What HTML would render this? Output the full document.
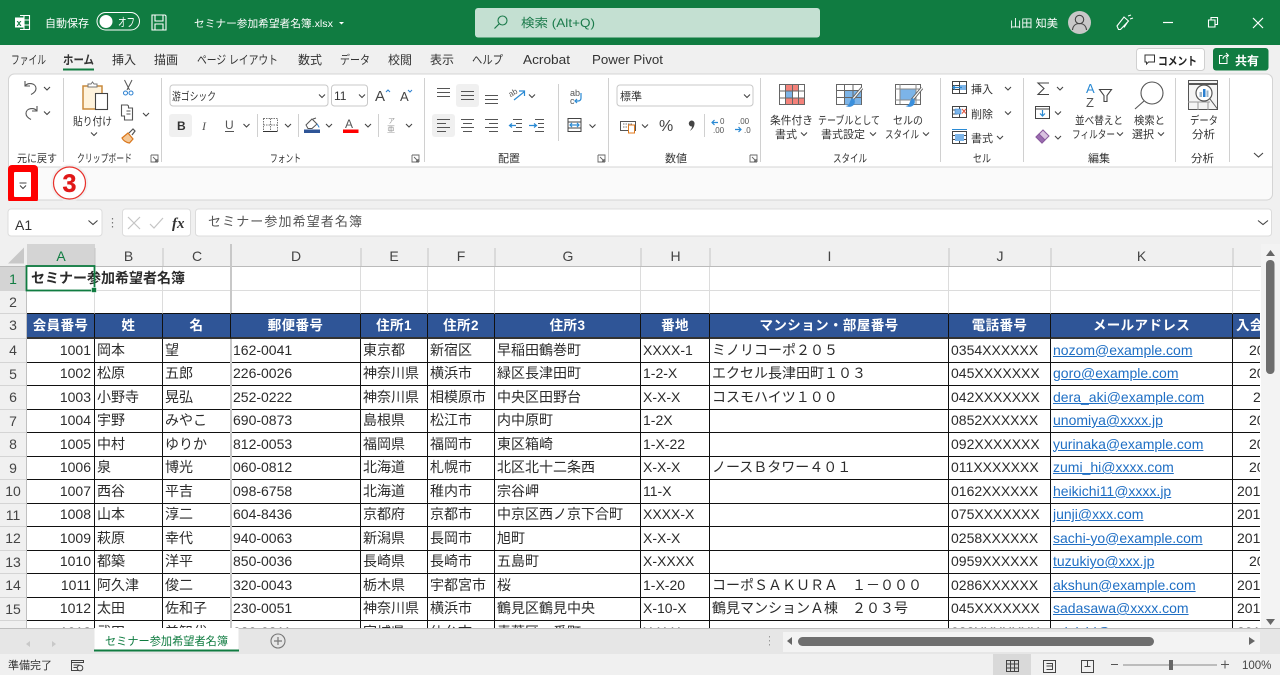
<!DOCTYPE html>
<html lang="ja"><head><meta charset="utf-8"><title>Excel</title>
<style>
html,body{margin:0;padding:0;width:1280px;height:675px;overflow:hidden;background:#fff}
#grid{position:absolute;left:27px;top:267px;width:1233px;height:361px;overflow:hidden;filter:blur(.25px)}
table{border-collapse:separate;border-spacing:0;table-layout:fixed;width:1333px;font:14px/20px "Liberation Sans","Noto Sans CJK JP",sans-serif;color:#2b2b2b}
td{box-sizing:border-box;padding:0 1px 2px 2px;border-right:1px solid #111;border-bottom:1px solid #111;white-space:nowrap;overflow:hidden;vertical-align:middle}
tr.e td{height:24px}tr.o td{height:23px}
tr.g td{border-right-color:#dcdcdc;border-bottom-color:#dcdcdc;overflow:visible;padding-bottom:1px}
tr.h td{height:25px;background:#2f5597;color:#fff;font-weight:bold;font-size:13.5px;text-align:center;border-bottom:2px solid #333;letter-spacing:.4px;padding:0}
td.n{text-align:right;padding-right:3px}
td a{color:#1f6fc4;text-decoration:underline}
td.l{border-right:0;padding-left:var(--p)}
#chrome{position:absolute;left:0;top:0;pointer-events:none;filter:blur(.2px)}
#chrome text{font-family:"Liberation Sans","Noto Sans CJK JP",sans-serif;font-size:11px;fill:#333}
.ch{fill:none;stroke:#444;stroke-width:1.1}
.ln{fill:none;stroke:#555;stroke-width:1.1}
.bl{fill:none;stroke:#2a8ad4;stroke-width:1.2}
</style></head><body>
<div id="grid"><table>
<colgroup><col style="width:68px"><col style="width:68px"><col style="width:68px"><col style="width:130px"><col style="width:67px"><col style="width:67px"><col style="width:146px"><col style="width:69px"><col style="width:239px"><col style="width:102px"><col style="width:182px"><col style="width:127px"></colgroup>
<tr class="e g"><td style="font-weight:bold;padding-left:4px;letter-spacing:0">セミナー参加希望者名簿</td><td></td><td></td><td></td><td></td><td></td><td></td><td></td><td></td><td></td><td></td><td></td></tr>
<tr class="o g"><td style="border-bottom-color:#111"></td><td style="border-bottom-color:#111"></td><td style="border-bottom-color:#111"></td><td style="border-bottom-color:#111"></td><td style="border-bottom-color:#111"></td><td style="border-bottom-color:#111"></td><td style="border-bottom-color:#111"></td><td style="border-bottom-color:#111"></td><td style="border-bottom-color:#111"></td><td style="border-bottom-color:#111"></td><td style="border-bottom-color:#111"></td><td style="border-bottom-color:#111"></td></tr>
<tr class="h"><td>会員番号</td><td>姓</td><td>名</td><td>郵便番号</td><td>住所1</td><td>住所2</td><td>住所3</td><td>番地</td><td>マンション・部屋番号</td><td>電話番号</td><td>メールアドレス</td><td style="text-align:left;padding-left:3px">入会日</td></tr>
<tr class="e"><td class="n">1001</td><td>岡本</td><td>望</td><td>162-0041</td><td>東京都</td><td>新宿区</td><td>早稲田鶴巻町</td><td>XXXX-1</td><td>ミノリコーポ２０５</td><td>0354XXXXXX</td><td><a>nozom@example.com</a></td><td class="l" style="--p:16px">2016/4/1</td></tr>
<tr class="o"><td class="n">1002</td><td>松原</td><td>五郎</td><td>226-0026</td><td>神奈川県</td><td>横浜市</td><td>緑区長津田町</td><td>1-2-X</td><td>エクセル長津田町１０３</td><td>045XXXXXXX</td><td><a>goro@example.com</a></td><td class="l" style="--p:16px">2016/5/1</td></tr>
<tr class="e"><td class="n">1003</td><td>小野寺</td><td>晃弘</td><td>252-0222</td><td>神奈川県</td><td>相模原市</td><td>中央区田野台</td><td>X-X-X</td><td>コスモハイツ１００</td><td>042XXXXXXX</td><td><a>dera_aki@example.com</a></td><td class="l" style="--p:20px">2016/6/1</td></tr>
<tr class="o"><td class="n">1004</td><td>宇野</td><td>みやこ</td><td>690-0873</td><td>島根県</td><td>松江市</td><td>内中原町</td><td>1-2X</td><td></td><td>0852XXXXXX</td><td><a>unomiya@xxxx.jp</a></td><td class="l" style="--p:16px">2016/7/1</td></tr>
<tr class="e"><td class="n">1005</td><td>中村</td><td>ゆりか</td><td>812-0053</td><td>福岡県</td><td>福岡市</td><td>東区箱崎</td><td>1-X-22</td><td></td><td>092XXXXXXX</td><td><a>yurinaka@example.com</a></td><td class="l" style="--p:16px">2016/8/1</td></tr>
<tr class="o"><td class="n">1006</td><td>泉</td><td>博光</td><td>060-0812</td><td>北海道</td><td>札幌市</td><td>北区北十二条西</td><td>X-X-X</td><td>ノースＢタワー４０１</td><td>011XXXXXXX</td><td><a>zumi_hi@xxxx.com</a></td><td class="l" style="--p:16px">2016/9/1</td></tr>
<tr class="e"><td class="n">1007</td><td>西谷</td><td>平吉</td><td>098-6758</td><td>北海道</td><td>稚内市</td><td>宗谷岬</td><td>11-X</td><td></td><td>0162XXXXXX</td><td><a>heikichi11@xxxx.jp</a></td><td class="l" style="--p:4px">2016/10/1</td></tr>
<tr class="o"><td class="n">1008</td><td>山本</td><td>淳二</td><td>604-8436</td><td>京都府</td><td>京都市</td><td>中京区西ノ京下合町</td><td>XXXX-X</td><td></td><td>075XXXXXXX</td><td><a>junji@xxx.com</a></td><td class="l" style="--p:4px">2016/11/1</td></tr>
<tr class="e"><td class="n">1009</td><td>萩原</td><td>幸代</td><td>940-0063</td><td>新潟県</td><td>長岡市</td><td>旭町</td><td>X-X-X</td><td></td><td>0258XXXXXX</td><td><a>sachi-yo@example.com</a></td><td class="l" style="--p:4px">2016/12/1</td></tr>
<tr class="o"><td class="n">1010</td><td>都築</td><td>洋平</td><td>850-0036</td><td>長崎県</td><td>長崎市</td><td>五島町</td><td>X-XXXX</td><td></td><td>0959XXXXXX</td><td><a>tuzukiyo@xxx.jp</a></td><td class="l" style="--p:16px">2017/1/1</td></tr>
<tr class="e"><td class="n">1011</td><td>阿久津</td><td>俊二</td><td>320-0043</td><td>栃木県</td><td>宇都宮市</td><td>桜</td><td>1-X-20</td><td>コーポＳＡＫＵＲＡ　１－０００</td><td>0286XXXXXX</td><td><a>akshun@example.com</a></td><td class="l" style="--p:4px">2017/10/1</td></tr>
<tr class="o"><td class="n">1012</td><td>太田</td><td>佐和子</td><td>230-0051</td><td>神奈川県</td><td>横浜市</td><td>鶴見区鶴見中央</td><td>X-10-X</td><td>鶴見マンションＡ棟　２０３号</td><td>045XXXXXXX</td><td><a>sadasawa@xxxx.com</a></td><td class="l" style="--p:4px">2017/11/1</td></tr>
<tr class="e"><td class="n">1013</td><td>武田</td><td>美智代</td><td>980-0811</td><td>宮城県</td><td>仙台市</td><td>青葉区一番町</td><td>X-X-X</td><td></td><td>022XXXXXXX</td><td><a>minichi@xxxx.com</a></td><td class="l" style="--p:4px">2017/12/1</td></tr>
</table></div>

<svg id="chrome" width="1280" height="675" viewBox="0 0 1280 675" xmlns="http://www.w3.org/2000/svg">
<defs><path id="c" class="ch" d="M-3-1.5 0 1.5 3-1.500"/></defs>

<!-- title bar -->
<rect width="1280" height="45" fill="#107c41"/>
<g fill="none" stroke="#fff" stroke-width="1.1">
<path d="M20 15.5h9.5v14H20M24 15.5v14M24 20h5.5M24 25h5.5"/>
</g>
<rect x="15" y="17.5" width="9" height="10" fill="#fff"/>
<text x="16.5" y="26" style="font-size:9px;font-weight:bold;fill:#107c41">x</text>
<text x="45" y="27" style="fill:#fff" textLength="44" lengthAdjust="spacingAndGlyphs">自動保存</text>
<rect x="97" y="12.5" width="42.500" height="17.500" rx="8.750" fill="none" stroke="#fff"/>
<circle cx="106" cy="21.500" r="6.500" fill="#fff"/>
<text x="118" y="26.500" style="fill:#fff;font-size:12px" textLength="17" lengthAdjust="spacingAndGlyphs">オフ</text>
<path d="M152 15h13l1 1v14h-14zM155 15v6h8v-6M155 30v-6h8v6" fill="none" stroke="#fff" stroke-width="1.1"/>
<text x="194" y="27" style="fill:#fff;font-size:10.5px" textLength="139" lengthAdjust="spacingAndGlyphs">セミナー参加希望者名簿.xlsx</text>
<path d="M339 22h5l-2.500 2.500z" fill="#fff"/>
<rect x="475" y="8" width="345" height="29.500" rx="3" fill="#c4e0d2"/>
<circle cx="502.500" cy="20.500" r="4.500" fill="none" stroke="#1a7a4a" stroke-width="1.1"/>
<path d="M499 24l-4.500 4.500" stroke="#1a7a4a" stroke-width="1.2"/>
<text x="521" y="27" style="fill:#1a7a4a;font-size:12px" textLength="74" lengthAdjust="spacingAndGlyphs">検索 (Alt+Q)</text>
<text x="1010" y="27" style="fill:#fff;font-size:11px" textLength="48" lengthAdjust="spacingAndGlyphs">山田 知美</text>
<circle cx="1079.500" cy="22.500" r="11.500" fill="#c8c8c8"/>
<circle cx="1079.500" cy="19.500" r="4.200" fill="none" stroke="#444" stroke-width="1.1"/>
<path d="M1072.500 30c.5-4.500 3.500-6.500 7-6.500s6.500 2 7 6.500" fill="none" stroke="#444" stroke-width="1.1"/>
<path d="M1117 26l7-9 4.500 4-8 8.500h-2zM1124 27.500l4-6M1128 16l3-1M1130 19l3-1" fill="none" stroke="#fff" stroke-width="1.1"/>
<path d="M1163 22.500h10" stroke="#fff" stroke-width="1.200"/>
<path d="M1208.500 20h6.500v7h-6.500zM1211 20v-2.500h6.500v7H1215" fill="none" stroke="#fff" stroke-width="1.100"/>
<path d="M1253 18l10 10M1263 18l-10 10" stroke="#fff" stroke-width="1.200"/>

<!-- tab strip -->
<rect y="45" width="1280" height="29" fill="#f0f0f0"/>
<g>
<text x="11" y="64" style="font-size:12px" textLength="35" lengthAdjust="spacingAndGlyphs">ファイル</text>
<text x="63" y="64" style="font-size:12px;font-weight:bold" textLength="31" lengthAdjust="spacingAndGlyphs">ホーム</text>
<text x="112" y="64" style="font-size:12px">挿入</text>
<text x="154" y="64" style="font-size:12px">描画</text>
<text x="197" y="64" style="font-size:12px" textLength="81" lengthAdjust="spacingAndGlyphs">ページ レイアウト</text>
<text x="298" y="64" style="font-size:12px">数式</text>
<text x="340" y="64" style="font-size:12px" textLength="30" lengthAdjust="spacingAndGlyphs">データ</text>
<text x="388" y="64" style="font-size:12px">校閲</text>
<text x="430" y="64" style="font-size:12px">表示</text>
<text x="472" y="64" style="font-size:12px" textLength="31" lengthAdjust="spacingAndGlyphs">ヘルプ</text>
<text x="523" y="64" style="font-size:12.500px" textLength="47" lengthAdjust="spacingAndGlyphs">Acrobat</text>
<text x="592" y="64" style="font-size:12.500px" textLength="71" lengthAdjust="spacingAndGlyphs">Power Pivot</text>
</g>
<rect x="63" y="68.500" width="31" height="2" fill="#107c41"/>
<rect x="1136.500" y="48.500" width="68" height="22" rx="3" fill="#fff" stroke="#d0d0d0"/>
<path d="M1145 55h9.500v7h-6l-2 2v-2h-1.500z" fill="none" stroke="#333"/>
<text x="1158" y="65" style="font-size:11.500px;font-weight:bold;fill:#222" textLength="39" lengthAdjust="spacingAndGlyphs">コメント</text>
<rect x="1213" y="48" width="55.500" height="22.500" rx="3" fill="#107c41"/>
<path d="M1227 58v5.500h-7.500v-8h3M1223 59c0-2 1.500-3.500 5-3.500M1226 53l2.500 2.500-2.500 2.500" fill="none" stroke="#fff"/>
<text x="1235" y="65" style="font-size:12px;font-weight:bold;fill:#fff">共有</text>

<!-- ribbon -->
<rect y="74" width="1280" height="127" fill="#f0f0f0"/>
<rect x="8.500" y="74" width="1264" height="126" rx="6" fill="#fafafa" stroke="#d4d4d4"/>
<path d="M8.500 167V80a6 6 0 0 1 6-6h1252a6 6 0 0 1 6 6v87z" fill="#fff" stroke="#d4d4d4"/>
<g stroke="#d0d0d0" stroke-width="1">
<path d="M63.500 78v84M161.500 78v84M424.500 78v84M608.500 78v84M760.500 78v84M940.500 78v84M1023.500 78v84M1175.500 78v84M1229.500 78v84"/>
<path d="M257.500 114v23M298.500 114v23M378.500 114v23M558.500 84v57M704.500 114v23"/>
</g>
<!-- group labels -->
<text x="17" y="162" textLength="40" lengthAdjust="spacingAndGlyphs">元に戻す</text>
<text x="77" y="162" textLength="55" lengthAdjust="spacingAndGlyphs">クリップボード</text>
<text x="270" y="162" textLength="31" lengthAdjust="spacingAndGlyphs">フォント</text>
<text x="498" y="162">配置</text>
<text x="665" y="162">数値</text>
<text x="833" y="162" textLength="34" lengthAdjust="spacingAndGlyphs">スタイル</text>
<text x="973" y="162" textLength="18" lengthAdjust="spacingAndGlyphs">セル</text>
<text x="1088" y="162">編集</text>
<text x="1191" y="162" textLength="23" lengthAdjust="spacingAndGlyphs">分析</text>
<g fill="none" stroke="#666" stroke-width=".9">
<path d="M151 155h7v7M151 155v7h7M153 157l4 4M157 159v2h-2" id="dl"/>
<use href="#dl" x="261"/><use href="#dl" x="447"/><use href="#dl" x="599"/>
</g>

<!-- undo / redo -->
<path d="M25 81v5h5M25 86c3-4 11-3 11 2.500 0 3-2 4.500-5 6" class="ln"/>
<path d="M37 106v5h-5M37 111c-3-4-11-3-11 2.500 0 3 2 4.500 5 6" class="ln"/>
<use href="#c" x="47" y="88.500"/><use href="#c" x="47" y="113"/>

<!-- clipboard -->
<rect x="83" y="86" width="19" height="23" fill="#fff3dc" stroke="#c98a3c" stroke-width="1.500"/>
<path d="M88 86v-2h3l1.500-2 1.500 2h3v3H88z" fill="#fff" stroke="#777"/>
<rect x="95.500" y="93.500" width="12" height="16" fill="#fff" stroke="#444" stroke-width="1.100"/>
<text x="73" y="125" textLength="39" lengthAdjust="spacingAndGlyphs">貼り付け</text>
<use href="#c" x="94" y="134"/>
<path d="M124.500 80l5 10M132 80l-5 10" stroke="#555" fill="none"/>
<circle cx="125.500" cy="93" r="2" fill="none" stroke="#2a7fd0"/><circle cx="131" cy="93" r="2" fill="none" stroke="#2a7fd0"/>
<path d="M121.500 105h6l1 1v2h4v12h-8v-4h-3zM128.500 108h4M126.500 111h4M126.500 114h4" class="ln"/>
<use href="#c" x="146" y="114.500"/>
<path d="M122 138l6-5 5 6-3.500 4c-3-.5-6-2-7.500-5z" fill="#f5c896" stroke="#d9761c" stroke-width="1.200"/>
<path d="M129 133l4-4 2 2-3 4" fill="none" stroke="#555" stroke-width="1.200"/>

<!-- font -->
<rect x="170" y="85" width="158" height="21" rx="3" fill="#fff" stroke="#c8c8c8"/>
<text x="172" y="100" textLength="44" lengthAdjust="spacingAndGlyphs">游ゴシック</text>
<use href="#c" x="322" y="96"/>
<rect x="331.500" y="85" width="36" height="21" rx="3" fill="#fff" stroke="#c8c8c8"/>
<text x="334" y="100" style="font-size:12px">11</text>
<use href="#c" x="362" y="96"/>
<text x="375" y="101" style="font-size:15px;fill:#444">A</text>
<path d="M386 92l2-2 2 2" fill="none" stroke="#2a7fd0"/>
<text x="400" y="101" style="font-size:13px;fill:#444">A</text>
<path d="M408 90l2 2 2-2" fill="none" stroke="#2a7fd0"/>
<rect x="169" y="114" width="23" height="23" rx="3" fill="#f0f0f0"/>
<text x="177" y="130" style="font-size:12px;font-weight:bold;fill:#333">B</text>
<text x="202" y="130" style="font-size:12px;font-style:italic;fill:#555;font-family:'Liberation Serif'">I</text>
<text x="225" y="129" style="font-size:12px;fill:#555">U</text>
<path d="M225 131.500h9" stroke="#555"/>
<use href="#c" x="246.500" y="125.500"/>
<path d="M263.500 118.500h14v13h-14zM270.500 118.500v13M263.500 125h14" fill="none" stroke="#777" stroke-dasharray="1.500 1"/>
<path d="M263 131.500h14.500" stroke="#333"/>
<use href="#c" x="288" y="125.500"/>
<path d="M306 125l6-6 5 5-5 4.500h-4zM313 119l3-1" fill="none" stroke="#555"/>
<path d="M317 124c1 1.500 2 2.500 2 3.500" stroke="#2a7fd0" fill="none"/>
<rect x="304" y="129.500" width="16" height="3.500" fill="#2f5597"/>
<use href="#c" x="329" y="125.500"/>
<text x="345" y="128" style="font-size:12px;fill:#555">A</text>
<rect x="343" y="129.500" width="15.500" height="3.500" fill="#f00"/>
<use href="#c" x="368" y="125.500"/>
<text x="388" y="123" style="font-size:7px;fill:#999">ア</text>
<text x="387" y="132" style="font-size:8px;fill:#999">亜</text>
<use href="#c" x="409" y="125.500"/>

<!-- alignment -->
<rect x="456" y="84" width="23" height="23" rx="3" fill="#f0f0f0"/>
<rect x="432" y="114" width="23" height="23" rx="3" fill="#f0f0f0"/>
<g stroke="#555" stroke-width="1.100" fill="none">
<path d="M437 88.500h13M437 92.500h13M437 96.500h13"/>
<path d="M461 91.500h13M461 95.500h13M461 99.500h13"/>
<path d="M485 95.500h13M485 99.500h13M485 103.500h13"/>
<path d="M437 119.500h13M437 123.500h9M437 127.500h13M437 131.500h9"/>
<path d="M461 119.500h13M463 123.500h9M461 127.500h13M463 131.500h9"/>
<path d="M485 119.500h13M489 123.500h9M485 127.500h13M489 131.500h9"/>
<path d="M513 119.500h9M516 123.500h6M516 127.500h6M513 131.500h9"/>
<path d="M535 119.500h9M535 131.500h9M538 123.500h6M538 127.500h6"/>
</g>
<path d="M516 125.500h-6M512 123.500l-2.500 2 2.500 2M535 125.500h-1M529 125.500h7M534 123.500l2.500 2-2.500 2" class="bl"/>
<text x="509" y="96" style="font-size:8px;fill:#555" transform="rotate(-30 512 94)">ab</text>
<path d="M514 100l10-8M519 91h5.500v5" class="bl"/>
<use href="#c" x="532" y="96"/>
<text x="570" y="96" style="font-size:9px;fill:#555">ab</text>
<text x="570" y="104" style="font-size:9px;fill:#555">c</text>
<path d="M581 93v5c0 2-1 3-3 3h-3M577 99l-2 2 2 2" class="bl"/>
<path d="M568 118.500h13v13h-13zM568 122h13M568 128h13" fill="none" stroke="#444"/>
<path d="M570 125h9M572 123l-2 2 2 2M577 123l2 2-2 2" class="bl"/>
<use href="#c" x="592.500" y="126"/>

<!-- number -->
<rect x="617" y="85" width="136" height="21" rx="3" fill="#fff" stroke="#c8c8c8"/>
<text x="620" y="100">標準</text>
<use href="#c" x="747" y="96"/>
<rect x="620.500" y="121.500" width="15" height="9" fill="#fff" stroke="#555"/>
<path d="M623 124h10M623 127h6" stroke="#777" stroke-dasharray="1.500 1"/>
<rect x="628.500" y="125" width="6" height="8" fill="#fff" stroke="#e07a1c"/>
<use href="#c" x="645" y="126"/>
<text x="659" y="131" style="font-size:16px;fill:#444">%</text>
<path d="M691.500 120.500a3 3 0 0 1 3 3.500c-.2 3-2.200 5.500-4.700 7 1.500-2 2.200-3.300 2.300-4.500a3 3 0 0 1-.6-6z" fill="#444"/>
<text x="720" y="124" style="font-size:8px;fill:#555">0</text><text x="713" y="133" style="font-size:8px;fill:#555">.00</text>
<path d="M718 122.500h-6M714.500 120l-2.500 2.500 2.500 2.500" class="bl"/>
<text x="738" y="124" style="font-size:8px;fill:#555">.00</text><text x="744" y="133" style="font-size:8px;fill:#555">.0</text>
<path d="M735 129.500h6M738.500 127l2.500 2.500-2.500 2.500" class="bl"/>

<!-- conditional formatting -->
<g transform="translate(779 84)">
<rect x=".5" y=".5" width="25" height="20" fill="#fff" stroke="#666"/>
<rect x="6" y="1" width="13" height="6" fill="#f4827a"/><rect x="6" y="7" width="8" height="7" fill="#7cb4e8"/><rect x="6" y="14" width="19" height="6" fill="#f4827a"/>
<path d="M6.500 0v20M13.500 0v20M19.500 0v20M0 7h25M0 14h25" stroke="#666" fill="none"/>
</g>
<text x="770" y="124" textLength="43" lengthAdjust="spacingAndGlyphs">条件付き</text>
<text x="775" y="138">書式</text><use href="#c" x="804" y="134"/>
<!-- table format -->
<g transform="translate(836 84)">
<rect x=".5" y=".5" width="25" height="20" fill="#fff" stroke="#666"/>
<rect x="9" y="6.500" width="16" height="14" fill="#7cb4e8"/>
<path d="M8.500 0v20M17 0v20M0 6.500h25M0 13.500h25" stroke="#666" fill="none"/>
</g>
<g id="br"><path d="M862 88l-10 12" stroke="#666" stroke-width="3"/><path d="M862 88l-10 12" stroke="#fff" stroke-width="1.200"/><path d="M853 98c-2 1-3 3-3.500 5-.5 1.500-2 3-4 3 3 1.500 7 1 8.500-1.500 1-1.500 1-3 .5-4.500z" fill="#3a8fdc"/></g>
<text x="818" y="124" textLength="62" lengthAdjust="spacingAndGlyphs">テーブルとして</text>
<text x="821" y="138" textLength="44">書式設定</text><use href="#c" x="873" y="134"/>
<!-- cell style -->
<g transform="translate(895 84)">
<rect x=".5" y=".5" width="25" height="20" fill="#fff" stroke="#666"/>
<rect x="5" y="5" width="16" height="11" fill="#7cb4e8"/>
<path d="M5 0v20M21 0v20M0 5h25M0 16h25" stroke="#888" fill="none"/>
</g>
<use href="#br" x="60"/>
<text x="893" y="124" textLength="30" lengthAdjust="spacingAndGlyphs">セルの</text>
<text x="885" y="138" textLength="34" lengthAdjust="spacingAndGlyphs">スタイル</text><use href="#c" x="926" y="134"/>

<!-- cells -->
<g fill="none" stroke="#444" stroke-width="1">
<path d="M952.500 81.500h14v12h-14zM952.500 85.500h14M952.500 89.500h14M959.500 81.500v12"/>
<path d="M952.500 106.500h14v11h-14zM952.500 110h5M952.500 114h5M959.500 106.500v3M959.500 114v3"/>
<path d="M952.500 131.500h14v12h-14zM952.500 135.500h14M952.500 139.500h14M959.500 135.500v8"/>
</g>
<rect x="960" y="85" width="6" height="5" fill="#7cb4e8"/><path d="M962 87.500h-9M955 85.500l-2 2 2 2" class="bl"/>
<rect x="955" y="109" width="6" height="5" fill="#7cb4e8" stroke="#2a7fd0" stroke-width=".5"/><path d="M962 109l4 4.500M966 109l-4 4.500" stroke="#e0503a" fill="none"/>
<rect x="955" y="134" width="9" height="7" fill="#7cb4e8"/><path d="M952 129.500h15" stroke="#2a8ad4"/>
<text x="971" y="93" textLength="22" lengthAdjust="spacingAndGlyphs">挿入</text><use href="#c" x="1008" y="88.500"/>
<text x="971" y="118" textLength="22" lengthAdjust="spacingAndGlyphs">削除</text><use href="#c" x="1008" y="113"/>
<text x="971" y="142" textLength="22" lengthAdjust="spacingAndGlyphs">書式</text><use href="#c" x="1000" y="137.500"/>

<!-- editing -->
<path d="M1049 83h-11l6 5.500-6 6h11" fill="none" stroke="#444" stroke-width="1.100"/><use href="#c" x="1060" y="88.500"/>
<rect x="1035.500" y="106.500" width="14" height="12" fill="#fff" stroke="#444"/><path d="M1035.500 109h14" stroke="#444"/><path d="M1042.500 110v6M1040 113.500l2.500 2.500 2.500-2.500" class="bl"/><use href="#c" x="1058" y="113"/>
<path d="M1036 137l7-7 6 6-7 7z" fill="#d9c2e0" stroke="#8a5a9e"/><path d="M1036 137l3-3 6 6-3 3z" fill="#9a6cb0" stroke="#8a5a9e"/><use href="#c" x="1058" y="137.500"/>
<text x="1086" y="93" style="font-size:13px;fill:#2a8ad4">A</text>
<text x="1086" y="107" style="font-size:13px;fill:#555">Z</text>
<path d="M1100 90h12l-4.500 6v6h-3v-6z" fill="none" stroke="#444" stroke-width="1.100" transform="translate(-.5 -.5)"/>
<text x="1075" y="124" textLength="48" lengthAdjust="spacingAndGlyphs">並べ替えと</text>
<text x="1072" y="138" textLength="43" lengthAdjust="spacingAndGlyphs">フィルター</text><use href="#c" x="1120" y="134"/>
<circle cx="1152" cy="93" r="11" fill="none" stroke="#555" stroke-width="1.100"/>
<path d="M1144 101l-9 8" stroke="#555" stroke-width="1.100"/>
<text x="1134" y="124" textLength="31" lengthAdjust="spacingAndGlyphs">検索と</text>
<text x="1132" y="138">選択</text><use href="#c" x="1161" y="134"/>
<!-- analysis -->
<rect x="1188.500" y="80.500" width="29" height="29" fill="#f4f4f4" stroke="#555"/>
<path d="M1188 84h30" stroke="#555" stroke-width="2"/>
<path d="M1188 102h22M1198 102v8M1208 102v8" stroke="#999"/>
<circle cx="1204" cy="93" r="8" fill="#fff" stroke="#555" stroke-width="1.200"/>
<rect x="1199.500" y="92" width="2.500" height="5" fill="#9db4c8"/><rect x="1203" y="89" width="2.500" height="8" fill="#2a7fd0"/><rect x="1206.500" y="90.500" width="2" height="6.500" fill="#9db4c8"/>
<path d="M1210 99l7.500 10" stroke="#555"/>
<text x="1190" y="124" textLength="28" lengthAdjust="spacingAndGlyphs">データ</text>
<text x="1192" y="138" textLength="23" lengthAdjust="spacingAndGlyphs">分析</text>
<path d="M1254 153l4.500 4 4.500-4" class="ch"/>

<!-- red marker and number -->
<path d="M8 169a4 4 0 0 1 4-4h22a4 4 0 0 1 4 4v30a4 4 0 0 1-4 4H12a4 4 0 0 1-4-4z" fill="#fe0000"/>
<rect x="14" y="172" width="17" height="25" rx="1" fill="#fff"/>
<path d="M19.500 183h7M20 185.500l3 3 3-3" fill="none" stroke="#444"/>
<circle cx="69.500" cy="183" r="18.500" fill="#eee" opacity=".8"/>
<circle cx="69.500" cy="183" r="16" fill="#fff" stroke="#e8302a" stroke-width="1.200"/>
<text x="69.500" y="192" text-anchor="middle" style="font-size:25px;font-weight:bold;fill:#e01818;stroke:#e01818;stroke-width:.4">3</text>

<!-- formula bar -->
<rect y="201" width="1280" height="43" fill="#f0f0f0"/>
<rect x="8" y="209" width="94" height="27" rx="3" fill="#fff" stroke="#dcdcdc"/>
<text x="15" y="230" style="font-size:14px;fill:#333">A1</text>
<path d="M88.500 220.500l4.500 4 4.500-4" class="ch"/>
<path d="M112.500 218v1.500M112.500 222v1.500M112.500 226v1.500" stroke="#777" stroke-width="1.200"/>
<rect x="122.500" y="209" width="68" height="27" rx="3" fill="#fff" stroke="#dcdcdc"/>
<path d="M128 217l12 12M140 217l-12 12M150 224l4 4 9-10" fill="none" stroke="#c4c4c4" stroke-width="1.200"/>
<text x="172" y="228" style="font-size:15px;font-style:italic;font-weight:bold;font-family:'Liberation Serif';fill:#333">fx</text>
<rect x="195.500" y="209" width="1076" height="27" rx="3" fill="#fff" stroke="#dcdcdc"/>
<text x="208" y="226" style="font-size:13px;fill:#555" textLength="154" lengthAdjust="spacing">セミナー参加希望者名簿</text>
<path d="M1258 220.500l5 4 5-4" class="ch"/>

<!-- column headers -->
<rect y="244" width="1261" height="23" fill="#f0f0f0"/>
<rect x="27" y="244" width="68" height="22.500" fill="#d4d4d4"/>
<path d="M8 263.500h16v-16z" fill="#c8c8c8"/>
<g stroke="#c4c4c4"><path d="M95 248v18M163 248v18M361 248v18M428 248v18M495 248v18M641 248v18M710 248v18M949 248v18M1051 248v18M1233 248v18"/></g>
<path d="M0 266.500h1261" stroke="#bbb"/>
<g text-anchor="middle">
<text x="61" y="261" style="font-size:14px;fill:#107c41">A</text>
<text x="128.500" y="261" style="font-size:14px;fill:#444">B</text>
<text x="197" y="261" style="font-size:14px;fill:#444">C</text>
<text x="296" y="261" style="font-size:14px;fill:#444">D</text>
<text x="394" y="261" style="font-size:14px;fill:#444">E</text>
<text x="461" y="261" style="font-size:14px;fill:#444">F</text>
<text x="568" y="261" style="font-size:14px;fill:#444">G</text>
<text x="675.500" y="261" style="font-size:14px;fill:#444">H</text>
<text x="829.500" y="261" style="font-size:14px;fill:#444">I</text>
<text x="1000" y="261" style="font-size:14px;fill:#444">J</text>
<text x="1141.500" y="261" style="font-size:14px;fill:#444">K</text>
</g>
<!-- row headers -->
<rect y="267" width="27" height="361" fill="#f0f0f0"/>
<rect y="267" width="26.500" height="24" fill="#d4d4d4"/>
<path d="M26.500 267v361" stroke="#c0c0c0"/>
<g stroke="#d4d4d4"><path d="M0 313.500h26M0 338.500h26M0 362.500h26M0 385.500h26M0 409.500h26M0 432.500h26M0 456.500h26M0 479.500h26M0 503.500h26M0 526.500h26M0 550.500h26M0 573.500h26M0 597.500h26M0 620.500h26"/></g>
<g text-anchor="middle">
<text x="13" y="284" style="font-size:14px;fill:#107c41">1</text>
<text x="13" y="307" style="font-size:14px;fill:#444">2</text>
<text x="13" y="330" style="font-size:14px;fill:#444">3</text>
<text x="13" y="355" style="font-size:14px;fill:#444">4</text>
<text x="13" y="379" style="font-size:14px;fill:#444">5</text>
<text x="13" y="402" style="font-size:14px;fill:#444">6</text>
<text x="13" y="426" style="font-size:14px;fill:#444">7</text>
<text x="13" y="449" style="font-size:14px;fill:#444">8</text>
<text x="13" y="473" style="font-size:14px;fill:#444">9</text>
<text x="13" y="496" style="font-size:14px;fill:#444">10</text>
<text x="13" y="520" style="font-size:14px;fill:#444">11</text>
<text x="13" y="543" style="font-size:14px;fill:#444">12</text>
<text x="13" y="567" style="font-size:14px;fill:#444">13</text>
<text x="13" y="590" style="font-size:14px;fill:#444">14</text>
<text x="13" y="614" style="font-size:14px;fill:#444">15</text>
</g>
<!-- grey column line -->
<rect x="230" y="244" width="2" height="69" fill="#c8c8c8"/>
<rect x="230" y="339" width="2" height="289" fill="#c8c8c8"/>
<!-- selection -->
<rect x="26.500" y="266" width="68" height="24.500" fill="none" stroke="#107c41" stroke-width="1.800"/>
<rect x="91.500" y="287.500" width="5" height="5" fill="#107c41" stroke="#fff" stroke-width=".6"/>

<!-- vertical scrollbar -->
<rect x="1261" y="244" width="19" height="384" fill="#f3f3f3"/>
<path d="M1266 256l4.500-6 4.500 6z" fill="#666"/>
<rect x="1266" y="260" width="8.500" height="114" rx="4" fill="#6e6e6e"/>
<path d="M1266 619l4.500 6 4.500-6z" fill="#666"/>

<!-- sheet tab bar -->
<rect y="628" width="1280" height="26" fill="#e6e6e6"/>
<path d="M0 628.500h1280" stroke="#bdbdbd"/>
<path d="M30 641l-4 3 4 3zM52 641l4 3-4 3z" fill="#c8c8c8"/>
<path d="M94.500 650v-22h144v22z" fill="#fff"/>
<rect x="94" y="649.500" width="145" height="2" fill="#107c41"/>
<text x="105" y="645" style="font-size:11.500px;fill:#107c41" textLength="123" lengthAdjust="spacingAndGlyphs">セミナー参加希望者名簿</text>
<circle cx="278" cy="641" r="7" fill="none" stroke="#777" stroke-width="1.100"/>
<path d="M274 641h8M278 637v8" stroke="#777" stroke-width="1.200"/>
<path d="M769.500 636v1.500M769.500 640v1.500M769.500 644v1.500" stroke="#999"/>
<rect x="783" y="632" width="477" height="20" fill="#f3f3f3"/>
<path d="M792 637l-5 4 5 4z" fill="#666"/>
<rect x="798" y="637" width="356" height="9" rx="4.500" fill="#6e6e6e"/>
<path d="M1249 637l6 4-6 4z" fill="#666"/>

<!-- status bar -->
<rect y="654" width="1280" height="21" fill="#f0f0f0"/>
<text x="8" y="669" textLength="44" lengthAdjust="spacingAndGlyphs">準備完了</text>
<path d="M71.500 660.500h12v2h-12zM71.500 662.500v8h7M73.500 665h6M73.500 667.500h4" fill="none" stroke="#444"/>
<circle cx="80" cy="668" r="2.800" fill="none" stroke="#444"/>
<rect x="993" y="654" width="38" height="21" fill="#d9d9d9"/>
<path d="M1006.500 660.500h12v11h-12zM1006.500 664h12M1006.500 668h12M1010.500 660.500v11M1014.500 660.500v11" fill="none" stroke="#444"/>
<path d="M1043.500 660.500h12v12h-12zM1046.500 663.500h6v6h-6M1046.500 666h6" fill="none" stroke="#444"/>
<path d="M1081.500 660.500h12v12h-12zM1087.500 660.500v6h-3M1087.500 666.500h3" fill="none" stroke="#444"/>
<path d="M1111 664.500h7M1221 664.500h8M1225 660.500v8" stroke="#555"/>
<path d="M1123 665h94" stroke="#888"/>
<rect x="1169" y="660" width="4" height="10" fill="#666"/>
<text x="1242" y="669" style="font-size:11.500px;fill:#444">100%</text>
</svg>
</body></html>
